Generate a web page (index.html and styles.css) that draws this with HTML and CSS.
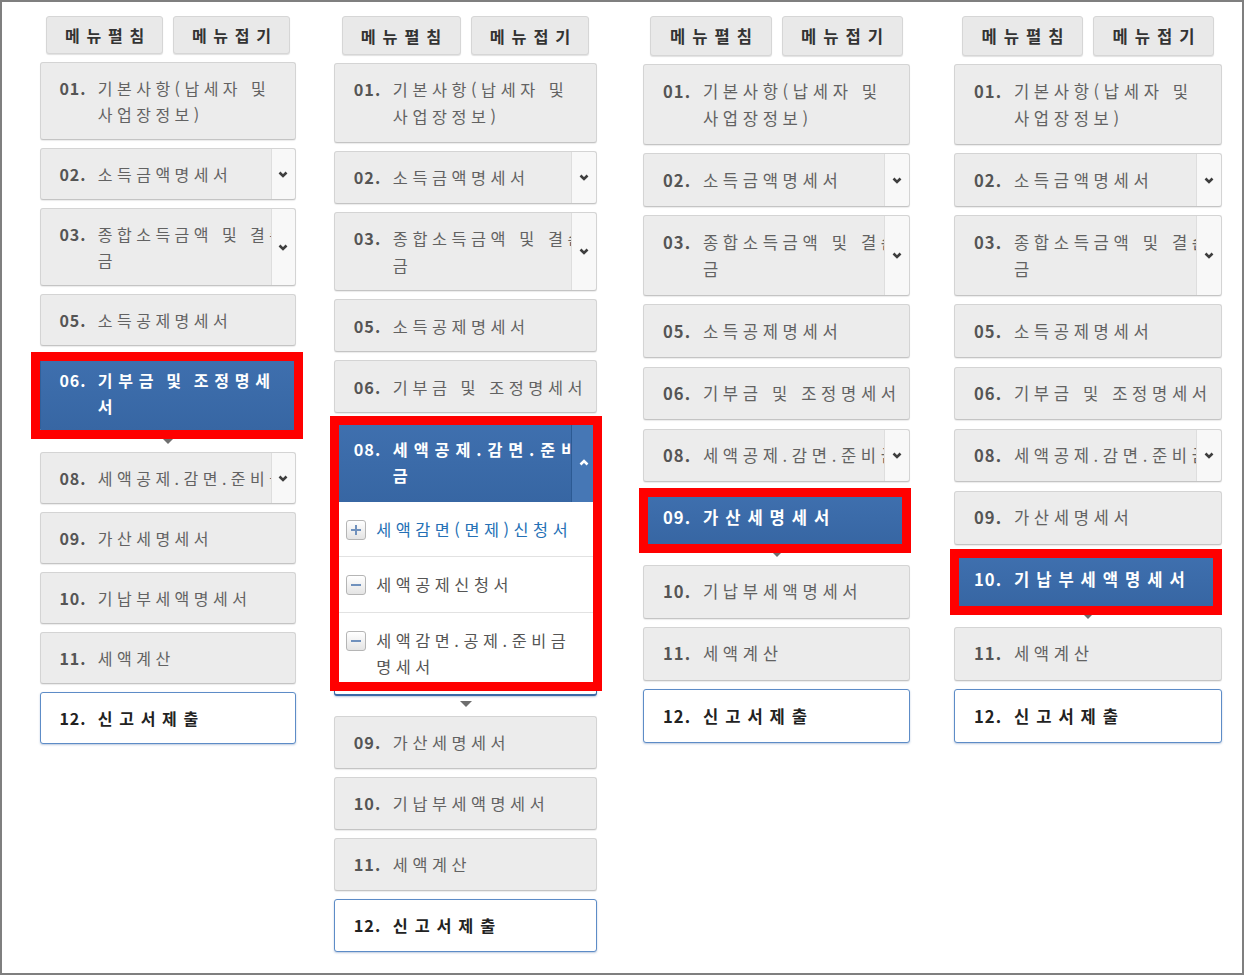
FILE: index.html
```html
<!doctype html>
<html lang="ko">
    <head>
        <meta charset="UTF-8" />
        <meta name="viewport" content="width=device-width, initial-scale=1.0" />
        <title>신고서 작성 메뉴</title>
        <link rel="stylesheet" href="styles.css">
    </head>
    <body>
        <div class="frame">
            <div class="board">
                <!-- 06 선택 -->
                <section class="steps steps--a">
                    <div class="menu-btns">
                        <button type="button" class="menu-btn">메뉴펼침</button>
                        <button type="button" class="menu-btn">메뉴접기</button>
                    </div>
                    <ol class="step-list">
                        <li class="step"><span class="step-no">01.</span><span class="step-name">기본사항(납세자 및 사업장정보)</span></li>
                        <li class="step"><span class="step-no">02.</span><span class="step-name">소득금액명세서</span><span class="step-toggle"><svg class="chev" viewBox="0 0 10 7"><path d="M1.5 1.5 5 5 8.5 1.5"/></svg></span></li>
                        <li class="step"><span class="step-no">03.</span><span class="step-name">종합소득금액 및 결손금</span><span class="step-toggle"><svg class="chev" viewBox="0 0 10 7"><path d="M1.5 1.5 5 5 8.5 1.5"/></svg></span></li>
                        <li class="step"><span class="step-no">05.</span><span class="step-name">소득공제명세서</span></li>
                        <li class="step is-current mark mark--a"><span class="step-no">06.</span><span class="step-name">기부금 및 조정명세서</span></li>
                        <li class="step"><span class="step-no">08.</span><span class="step-name">세액공제.감면.준비금</span><span class="step-toggle"><svg class="chev" viewBox="0 0 10 7"><path d="M1.5 1.5 5 5 8.5 1.5"/></svg></span></li>
                        <li class="step"><span class="step-no">09.</span><span class="step-name">가산세명세서</span></li>
                        <li class="step"><span class="step-no">10.</span><span class="step-name">기납부세액명세서</span></li>
                        <li class="step"><span class="step-no">11.</span><span class="step-name">세액계산</span></li>
                        <li class="step step--submit"><span class="step-no">12.</span><span class="step-name">신고서제출</span></li>
                    </ol>
                </section>

                <!-- 08 펼침 -->
                <section class="steps steps--b">
                    <div class="menu-btns">
                        <button type="button" class="menu-btn">메뉴펼침</button>
                        <button type="button" class="menu-btn">메뉴접기</button>
                    </div>
                    <ol class="step-list">
                        <li class="step"><span class="step-no">01.</span><span class="step-name">기본사항(납세자 및 사업장정보)</span></li>
                        <li class="step"><span class="step-no">02.</span><span class="step-name">소득금액명세서</span><span class="step-toggle"><svg class="chev" viewBox="0 0 10 7"><path d="M1.5 1.5 5 5 8.5 1.5"/></svg></span></li>
                        <li class="step"><span class="step-no">03.</span><span class="step-name">종합소득금액 및 결손금</span><span class="step-toggle"><svg class="chev" viewBox="0 0 10 7"><path d="M1.5 1.5 5 5 8.5 1.5"/></svg></span></li>
                        <li class="step"><span class="step-no">05.</span><span class="step-name">소득공제명세서</span></li>
                        <li class="step"><span class="step-no">06.</span><span class="step-name">기부금 및 조정명세서</span></li>
                        <li class="step-group mark mark--b">
                            <div class="step is-current">
                                <span class="step-no">08.</span><span class="step-name">세액공제.감면.준비금</span>
                                <span class="step-toggle"><svg class="chev" viewBox="0 0 10 7"><path d="M1.5 5.5 5 2 8.5 5.5"/></svg></span>
                            </div>
                            <ul class="sub-list">
                                <li class="sub-item is-active"><span class="sub-icon sub-icon--plus"></span><span>세액감면(면제)신청서</span></li>
                                <li class="sub-item"><span class="sub-icon"></span><span>세액공제신청서</span></li>
                                <li class="sub-item"><span class="sub-icon"></span><span>세액감면.공제.준비금명세서</span></li>
                            </ul>
                        </li>
                        <li class="step"><span class="step-no">09.</span><span class="step-name">가산세명세서</span></li>
                        <li class="step"><span class="step-no">10.</span><span class="step-name">기납부세액명세서</span></li>
                        <li class="step"><span class="step-no">11.</span><span class="step-name">세액계산</span></li>
                        <li class="step step--submit"><span class="step-no">12.</span><span class="step-name">신고서제출</span></li>
                    </ol>
                </section>

                <!-- 09 선택 -->
                <section class="steps steps--c">
                    <div class="menu-btns">
                        <button type="button" class="menu-btn">메뉴펼침</button>
                        <button type="button" class="menu-btn">메뉴접기</button>
                    </div>
                    <ol class="step-list">
                        <li class="step"><span class="step-no">01.</span><span class="step-name">기본사항(납세자 및 사업장정보)</span></li>
                        <li class="step"><span class="step-no">02.</span><span class="step-name">소득금액명세서</span><span class="step-toggle"><svg class="chev" viewBox="0 0 10 7"><path d="M1.5 1.5 5 5 8.5 1.5"/></svg></span></li>
                        <li class="step"><span class="step-no">03.</span><span class="step-name">종합소득금액 및 결손금</span><span class="step-toggle"><svg class="chev" viewBox="0 0 10 7"><path d="M1.5 1.5 5 5 8.5 1.5"/></svg></span></li>
                        <li class="step"><span class="step-no">05.</span><span class="step-name">소득공제명세서</span></li>
                        <li class="step"><span class="step-no">06.</span><span class="step-name">기부금 및 조정명세서</span></li>
                        <li class="step"><span class="step-no">08.</span><span class="step-name">세액공제.감면.준비금</span><span class="step-toggle"><svg class="chev" viewBox="0 0 10 7"><path d="M1.5 1.5 5 5 8.5 1.5"/></svg></span></li>
                        <li class="step is-current mark mark--c"><span class="step-no">09.</span><span class="step-name">가산세명세서</span></li>
                        <li class="step"><span class="step-no">10.</span><span class="step-name">기납부세액명세서</span></li>
                        <li class="step"><span class="step-no">11.</span><span class="step-name">세액계산</span></li>
                        <li class="step step--submit"><span class="step-no">12.</span><span class="step-name">신고서제출</span></li>
                    </ol>
                </section>

                <!-- 10 선택 -->
                <section class="steps steps--d">
                    <div class="menu-btns">
                        <button type="button" class="menu-btn">메뉴펼침</button>
                        <button type="button" class="menu-btn">메뉴접기</button>
                    </div>
                    <ol class="step-list">
                        <li class="step"><span class="step-no">01.</span><span class="step-name">기본사항(납세자 및 사업장정보)</span></li>
                        <li class="step"><span class="step-no">02.</span><span class="step-name">소득금액명세서</span><span class="step-toggle"><svg class="chev" viewBox="0 0 10 7"><path d="M1.5 1.5 5 5 8.5 1.5"/></svg></span></li>
                        <li class="step"><span class="step-no">03.</span><span class="step-name">종합소득금액 및 결손금</span><span class="step-toggle"><svg class="chev" viewBox="0 0 10 7"><path d="M1.5 1.5 5 5 8.5 1.5"/></svg></span></li>
                        <li class="step"><span class="step-no">05.</span><span class="step-name">소득공제명세서</span></li>
                        <li class="step"><span class="step-no">06.</span><span class="step-name">기부금 및 조정명세서</span></li>
                        <li class="step"><span class="step-no">08.</span><span class="step-name">세액공제.감면.준비금</span><span class="step-toggle"><svg class="chev" viewBox="0 0 10 7"><path d="M1.5 1.5 5 5 8.5 1.5"/></svg></span></li>
                        <li class="step"><span class="step-no">09.</span><span class="step-name">가산세명세서</span></li>
                        <li class="step is-current mark mark--d"><span class="step-no">10.</span><span class="step-name">기납부세액명세서</span></li>
                        <li class="step"><span class="step-no">11.</span><span class="step-name">세액계산</span></li>
                        <li class="step step--submit"><span class="step-no">12.</span><span class="step-name">신고서제출</span></li>
                    </ol>
                </section>
            </div>
        </div>
    </body>
</html>
```

FILE: styles.css
```css
body {
    margin: 0;
    background: #fff;
    font-family: "Noto Sans CJK KR", "Noto Sans", sans-serif;
}
.frame {
    width: 1244px;
    height: 975px;
    box-sizing: border-box;
    border: 2px solid #7f7f7f;
}
.board {
    display: flex;
    align-items: flex-start;
    padding: 14px 0 0 38px;
}
.steps {
    flex: none;
}
.steps--a {
    width: 256px;
    font-size: 16px;
}
.steps--b {
    width: 263px;
    font-size: 16.3px;
    margin-left: 38px;
}
.steps--c {
    width: 267px;
    font-size: 16.6px;
    margin-left: 46px;
}
.steps--d {
    width: 268px;
    font-size: 16.6px;
    margin-left: 44px;
}

/* 메뉴펼침 / 메뉴접기 */
.menu-btns {
    display: flex;
    justify-content: center;
    gap: 10px;
    margin-bottom: 0.5em;
}
.menu-btn {
    width: 7.3em;
    height: 2.4em;
    padding: 0 0 0 0.42em;
    font-family: inherit;
    font-size: 1em;
    font-weight: bold;
    letter-spacing: 0.42em;
    color: #333;
    background: #e9e9e9;
    border: 1px solid #d6d6d6;
    border-radius: 3px;
    box-shadow: 0 1px 1px rgba(0, 0, 0, 0.12);
}

.step-list {
    list-style: none;
    margin: 0;
    padding: 0;
    display: flex;
    flex-direction: column;
    gap: 0.5em;
}
.step {
    position: relative;
    display: flex;
    padding: 0.75em 0 0.75em 1.15em;
    line-height: 1.625;
    letter-spacing: 0.28em;
    color: #626262;
    background: #ececec;
    border: 1px solid #d4d4d4;
    border-bottom-color: #c4c4c4;
    border-radius: 3px;
    box-shadow: 0 1px 1px rgba(0, 0, 0, 0.08);
}
.step-no {
    flex: none;
    width: 2.4em;
    font-weight: bold;
    letter-spacing: 0.06em;
    color: #555;
}
.step-name {
    flex: 1;
    min-width: 0;
}
.step-toggle {
    position: absolute;
    top: 0;
    right: 0;
    bottom: 0;
    width: 1.45em;
    display: flex;
    align-items: center;
    justify-content: center;
    background: #f8f8f8;
    border-left: 1px solid #dedede;
    border-radius: 0 3px 3px 0;
}
.chev {
    width: 10px;
    height: 7px;
    fill: none;
    stroke: #3e3e3e;
    stroke-width: 2.6;
}

.step.is-current {
    margin-bottom: 12px;
    color: #fff;
    font-weight: bold;
    letter-spacing: 0.36em;
    word-spacing: -0.2em;
    background: linear-gradient(#3f70af, #3766a3);
    border-color: #30609b;
}
.steps--c .step.is-current,
.steps--d .step.is-current {
    letter-spacing: 0.42em;
}
.step.is-current .step-no {
    color: #fff;
}
.step.is-current .step-toggle {
    background: #4677b5;
    border-left-color: #2c5a93;
}
.step.is-current .chev {
    stroke: #fff;
}
.step.is-current::after,
.step-group::after {
    content: "";
    position: absolute;
    left: 50%;
    top: calc(100% + 7px);
    margin-left: -6px;
    border-left: 6px solid transparent;
    border-right: 6px solid transparent;
    border-top: 6px solid #6e6e6e;
}

.step--submit {
    color: #222;
    font-weight: bold;
    letter-spacing: 0.42em;
    background: #fff;
    border-color: #5d8cc7;
    box-shadow: 0 1px 2px rgba(60, 100, 160, 0.35);
}
.step--submit .step-no {
    color: #222;
}

/* 펼쳐진 08 */
.step-group {
    position: relative;
    margin-bottom: 12px;
    background: #fff;
    border: 1px solid #3a69a6;
    border-bottom-width: 2px;
    border-radius: 3px;
    box-shadow: 0 1px 2px rgba(60, 100, 160, 0.35);
}
.step-group .step.is-current {
    margin: 0;
    padding-top: calc(0.75em + 1px);
    padding-bottom: calc(0.75em + 1px);
    border: none;
    border-radius: 0;
    box-shadow: none;
}
.step-group .step.is-current::after {
    content: none;
}
.sub-list {
    list-style: none;
    margin: 0;
    padding: 0;
}
.sub-item {
    display: flex;
    align-items: flex-start;
    gap: 0.6em;
    padding: 0.86em 0.7em 0.86em 0.7em;
    line-height: 1.625;
    letter-spacing: 0.28em;
    color: #555;
    border-top: 1px solid #e2e2e2;
}
.sub-item:first-child {
    border-top: none;
}
.sub-item.is-active {
    color: #2470b5;
}
.sub-icon {
    flex: none;
    position: relative;
    width: 18px;
    height: 18px;
    margin-top: 4px;
    border: 1px solid #b5b5b5;
    border-radius: 3px;
    background: linear-gradient(#fff, #e4e4e4);
}
.sub-icon::before {
    content: "";
    position: absolute;
    left: 4px;
    right: 4px;
    top: 8px;
    height: 2px;
    background: #7091bd;
}
.sub-icon--plus::after {
    content: "";
    position: absolute;
    top: 4px;
    bottom: 4px;
    left: 8px;
    width: 2px;
    background: #7091bd;
}

/* 빨간 강조 표시 */
.mark::before {
    content: "";
    position: absolute;
    z-index: 2;
    border: 9px solid #ff0000;
    pointer-events: none;
}
.mark--a::before {
    top: -3px;
    bottom: -8px;
    left: -10px;
    right: -8px;
}
.mark--b::before {
    top: -6px;
    bottom: 3px;
    left: -5px;
    right: -6px;
}
.mark--c::before {
    top: -4px;
    bottom: -9px;
    left: -5px;
    right: -2px;
}
.mark--d::before {
    top: -5px;
    bottom: -9px;
    left: -5px;
    right: -1px;
}
```
